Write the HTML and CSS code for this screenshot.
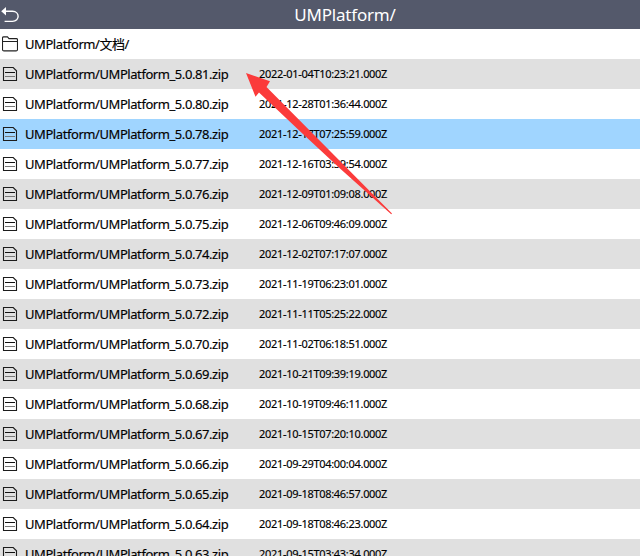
FILE: index.html
```
<!DOCTYPE html>
<html lang="zh">
<head>
<meta charset="utf-8">
<title>UMPlatform/</title>
<link rel="stylesheet" href="styles.css">
</head>
<body>
<svg class="defs" width="0" height="0">
  <symbol id="file" viewBox="0 0 16 16"><path d="M1.5 1.5H11.2L14.5 4.8V14.5H1.5Z" fill="none" stroke="#1c1c1c" stroke-width="1.1"/><path d="M3 6.5H13" stroke="#111"/><path d="M3 10.5H13" stroke="#777"/></symbol>
</svg>
<header class="bar">
  <svg class="back" viewBox="0 0 20 20"><path d="M5 6.3H12.5C20 6.3 20 16.4 12.5 16.4H4.6" fill="none" stroke="#fff" stroke-width="1.4"/><path d="M1.2 6.3L6 2V10.6Z" fill="#fff"/></svg>
  <h1 class="title">UMPlatform/</h1>
</header>
<ul class="list" id="list">
  <li class="row"><svg class="icon" viewBox="0 0 16 16"><path d="M.5 14V2Q.5.9 1.6.9H5.5L7 2.6H14.4Q15.5 2.6 15.5 3.7V13.5Q15.5 14.9 14.1 14.9H1.9Q.5 14.9.5 13.5M.5 5.5H15.5" fill="none" stroke="#222" stroke-width="1.1"/></svg><span class="name">UMPlatform/文档/</span></li>
</ul>
<svg class="arrow" viewBox="0 0 640 556"><path d="M246 73L270 81.3L266.5 87L392 213.6L391.2 214.2L340 168.6L300 131.3L259 92.5L255.5 96.7Z" fill="#fb3b3b"/></svg>
<script src="list.js"></script>
</body>
</html>
```
FILE: styles.css
```
* { box-sizing: border-box; }
body {
  margin: 0;
  height: 556px;
  overflow: hidden;
  position: relative;
  background: #fff;
  color: #000;
  font-family: "Noto Sans", "Noto Sans CJK SC", sans-serif;
}
.defs { position: absolute; }
.bar {
  display: grid;
  grid-template-columns: 50px 1fr;
  align-items: center;
  height: 29px;
  background: #54596b;
  color: #fff;
}
.back { width: 20px; height: 20px; }
.title {
  margin: 0;
  text-align: center;
  font-size: 17px;
  font-weight: 400;
  line-height: 29px;
  letter-spacing: -0.2px;
}
.list { margin: 0; padding: 0; list-style: none; }
.row {
  display: grid;
  grid-template-columns: 23px 234px 1fr;
  align-items: center;
  height: 30px;
  padding-left: 2px;
  line-height: 30px;
  white-space: nowrap;
}
.row:nth-child(even) { background: #e0e0e0; }
.row.selected { background: #a0d5ff; }
.icon { width: 16px; height: 16px; }
.name {
  font-size: 13px;
  letter-spacing: -0.43px;
  -webkit-text-stroke: 0.15px #000;
}
.date {
  font-size: 11px;
  letter-spacing: -0.3px;
  -webkit-text-stroke: 0.15px #000;
}
.arrow {
  position: absolute;
  left: 0;
  top: 0;
  width: 640px;
  height: 556px;
  pointer-events: none;
}
```
FILE: list.js
```
const files = [
  ["81", "2022-01-04T10:23:21"],
  ["80", "2021-12-28T01:36:44"],
  ["78", "2021-12-17T07:25:59"],
  ["77", "2021-12-16T03:59:54"],
  ["76", "2021-12-09T01:09:08"],
  ["75", "2021-12-06T09:46:09"],
  ["74", "2021-12-02T07:17:07"],
  ["73", "2021-11-19T06:23:01"],
  ["72", "2021-11-11T05:25:22"],
  ["70", "2021-11-02T06:18:51"],
  ["69", "2021-10-21T09:39:19"],
  ["68", "2021-10-19T09:46:11"],
  ["67", "2021-10-15T07:20:10"],
  ["66", "2021-09-29T04:00:04"],
  ["65", "2021-09-18T08:46:57"],
  ["64", "2021-09-18T08:46:23"],
  ["63", "2021-09-15T03:43:34"]
];
document.getElementById("list").insertAdjacentHTML("beforeend", files.map(([v, d]) =>
  `<li class="row${v === "78" ? " selected" : ""}"><svg class="icon"><use href="#file"/></svg><span class="name">UMPlatform/UMPlatform_5.0.${v}.zip</span><time class="date">${d}.000Z</time></li>`
).join(""));
```
